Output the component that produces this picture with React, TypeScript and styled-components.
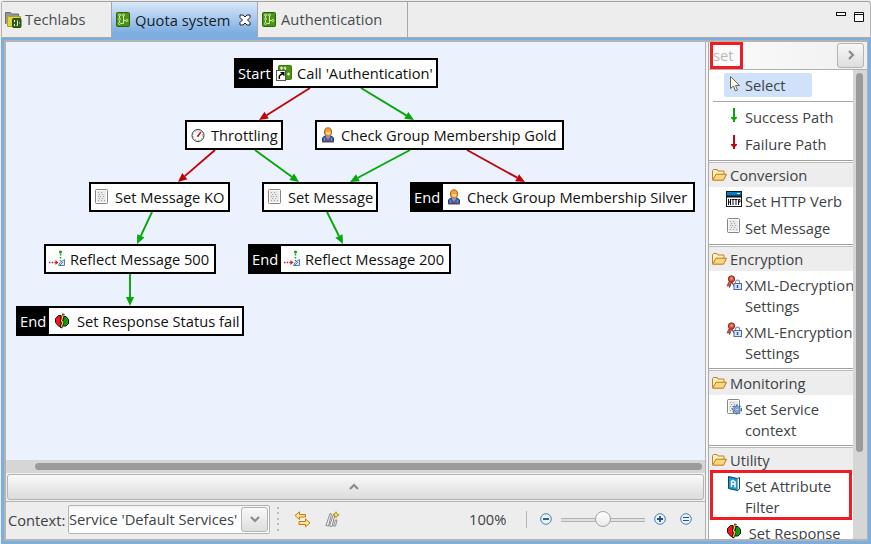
import React from 'react';
import styled, { createGlobalStyle } from 'styled-components';

const GlobalStyle = createGlobalStyle`
  * { box-sizing: border-box; }
  html, body { margin: 0; padding: 0; }
  body {
    width: 871px;
    height: 544px;
    overflow: hidden;
    background: #ededed;
    color: #3d4245;
    font: 14.7px/20px "Open Sans", "Noto Sans", sans-serif;
    white-space: nowrap;
  }
`;

const SUCCESS = '#05a80b';
const FAILURE = '#c00408';
const BLUE = '#7eaee0';

const Window = styled.div`
  width: 871px;
  height: 544px;
  display: flex;
  flex-direction: column;
  padding: 1px 0 0 1px;
  background: #ededed;
`;

const TabBar = styled.div`
  height: 37px;
  flex: none;
  display: flex;
  border-top: 1px solid #a2a2a2;
  border-left: 1px solid #b4b4b4;
  border-right: 1px solid #b4b4b4;
  border-radius: 3px 3px 0 0;
`;

const Tab = styled.div<{ $width: number; $active?: boolean }>`
  width: ${(p) => p.$width}px;
  display: flex;
  align-items: center;
  padding: 0 0 1px 4px;
  gap: 5px;
  border-right: 1px solid #a8a8a8;
  border-bottom: ${(p) => (p.$active ? 'none' : '1px solid #a8a8a8')};
  background: ${(p) => (p.$active ? 'linear-gradient(#d9e7f7, #a9caee 45%, #7eaee0 85%)' : '#ededed')};
  color: ${(p) => (p.$active ? '#17202a' : '#484d50')};
  svg { flex: none; }
`;

const FolderTab = styled(Tab)`
  padding-left: 3px;
  gap: 3px;
`;

const TabText = styled.span`
  letter-spacing: 0.05px;
`;

const CloseIcon = styled.svg`
  margin-left: 3px;
`;

const WindowButtons = styled.div`
  flex: 1;
  display: flex;
  justify-content: flex-end;
  gap: 8px;
  padding: 10px 6px 0 0;
  border-bottom: 1px solid #a8a8a8;
`;

const Frame = styled.div`
  flex: 1;
  min-height: 0;
  display: flex;
  border-style: solid;
  border-color: ${BLUE};
  border-width: 2px 3px 3px 3px;
`;

const Inner = styled.div`
  flex: 1;
  min-width: 0;
  display: flex;
  border: 2px solid #b2b4b2;
  border-right-width: 1px;
  background: #f4f4f4;
`;

const Editor = styled.div`
  width: 700px;
  flex: none;
  display: flex;
  flex-direction: column;
  border-right: 1px solid #b0b0b0;
  background: #ededed;
`;

const Canvas = styled.div`
  position: relative;
  height: 418px;
  flex: none;
  background: #ebf1fd;
  overflow: hidden;
`;

const Links = styled.svg`
  position: absolute;
  inset: 0;
`;

const NodeBox = styled.div<{ $x: number; $y: number; $w: number; $inset?: number }>`
  position: absolute;
  left: ${(p) => p.$x}px;
  top: ${(p) => p.$y}px;
  width: ${(p) => p.$w}px;
  height: 30px;
  display: flex;
  align-items: center;
  border: 2px solid #000;
  background: #fff;
  color: #111;
  svg {
    flex: none;
    margin: 0 ${(p) => 5 + (p.$inset ?? 0)}px 1px ${(p) => 3 + (p.$inset ?? 0)}px;
  }
`;

const NodeTag = styled.span<{ $w: number }>`
  width: ${(p) => p.$w}px;
  flex: none;
  align-self: stretch;
  display: flex;
  align-items: center;
  padding-left: 2px;
  background: #000;
  color: #fff;
`;

const HScroll = styled.div`
  height: 13px;
  flex: none;
  display: flex;
  align-items: center;
  padding: 0 3px 0 29px;
  background: #d6d6d6;
`;

const HThumb = styled.div`
  flex: 1;
  height: 7px;
  border-radius: 4px;
  background: #9a9b9c;
`;

const ExpandBar = styled.div`
  height: 26px;
  flex: none;
  margin: 1px 1px 0 1px;
  padding-right: 3px;
  display: flex;
  align-items: center;
  justify-content: center;
  border: 1px solid #b4b5b1;
  border-radius: 3px;
  background: linear-gradient(#f9f9f9, #dcdcdc);
`;

const ToolStrip = styled.div`
  flex: 1;
  margin-top: 1px;
  display: flex;
  align-items: center;
  padding: 0 0 3px 2px;
  border-top: 1px solid #b4b5b3;
`;

const ContextLabel = styled.span`
  width: 57px;
  padding-top: 2px;
`;

const Combo = styled.div`
  width: 202px;
  height: 29px;
  margin-left: 3px;
  display: flex;
  align-items: center;
  border: 1px solid #b4b5b1;
  border-radius: 2px;
  background: linear-gradient(#f3f3f3, #fff 8px);
`;

const ComboText = styled.span`
  flex: 1;
`;

const SmallButton = styled.div<{ $w: number; $h: number }>`
  width: ${(p) => p.$w}px;
  height: ${(p) => p.$h}px;
  flex: none;
  margin-right: 1px;
  display: flex;
  align-items: center;
  justify-content: center;
  border: 1px solid #b4b5b1;
  border-radius: 3px;
  background: linear-gradient(#f8f8f8, #dedede);
`;

const Grip = styled.div`
  width: 2px;
  height: 24px;
  margin: 0 15px 0 7px;
  background: repeating-linear-gradient(#bdbdbd 0 2px, transparent 2px 5.4px);
`;

const ToolGap = styled.div`
  width: 14px;
`;

const ZoomValue = styled.span`
  margin-left: 129px;
  width: 38px;
`;

const Divider = styled.div`
  width: 1px;
  height: 17px;
  margin: 0 13px 0 19px;
  background: #b4b4b4;
`;

const Slider = styled.div`
  width: 84px;
  height: 17px;
  margin: 0 9px 0 9px;
  display: flex;
  align-items: center;
  justify-content: center;
  background: linear-gradient(#b3b3b0, #b3b3b0) 0 7px / 100% 1px no-repeat,
    linear-gradient(#e0e0e0, #e0e0e0) 0 8px / 100% 2px no-repeat,
    linear-gradient(#b3b3b0, #b3b3b0) 0 10px / 100% 1px no-repeat;
`;

const Knob = styled.div`
  width: 16px;
  height: 16px;
  border: 1px solid #a5a6a2;
  border-radius: 50%;
  background: linear-gradient(#fff, #e9e9e9);
`;

const ZoomFit = styled.div`
  display: flex;
  margin-left: 14px;
`;

const Palette = styled.div`
  position: relative;
  width: 159px;
  margin-left: 2px;
  flex: none;
  display: flex;
  flex-direction: column;
  border-left: 1px solid #a9aaa9;
  background: #fff;
  overflow: hidden;
`;

const SearchRow = styled.div`
  height: 28px;
  flex: none;
  display: flex;
  align-items: center;
  justify-content: space-between;
  padding: 0 2px 1px 4px;
  border-bottom: 1px solid #b0b0ae;
  background: linear-gradient(90deg, #fbfbfb, #f0f0f0);
  color: #b7babb;
`;

const PaletteBody = styled.div`
  flex: 1;
  min-height: 0;
  display: flex;
`;

const Drawers = styled.div`
  width: 144px;
  flex: none;
  overflow: hidden;
`;

const VScroll = styled.div`
  flex: 1;
  padding: 3px 3px 0 3px;
  background: #d6d6d6;
`;

const VThumb = styled.div`
  width: 7px;
  height: 379px;
  border-radius: 4px;
  background: #9a9b9c;
`;

const ToolsGroup = styled.div`
  height: 90px;
  padding-top: 3px;
`;

const SelectRow = styled.div`
  width: 88px;
  height: 24px;
  margin-left: 15px;
  display: flex;
  align-items: center;
  padding-left: 3px;
  gap: 2px;
  background: #cfe2fa;
  border-radius: 2px;
  svg { margin-bottom: 2px; }
`;

const ToolsRule = styled.div`
  height: 1px;
  margin: 4px 0 1px 4px;
  background: #a8a8a8;
`;

const Item = styled.div<{ $lines?: number }>`
  height: ${(p) => (p.$lines === 2 ? 47 : 27)}px;
  display: flex;
  padding: 4px 0 0 17px;
  gap: 3px;
  line-height: 20.5px;
  white-space: pre;
  svg { flex: none; }
`;

const Drawer = styled.div`
  border-top: 1px solid #a0a0a0;
  padding: 1px 0 3px;
`;

const DrawerTitle = styled.div`
  height: 25px;
  display: flex;
  align-items: center;
  padding: 0 0 1px 3px;
  gap: 3px;
  border-top: 1px solid #bdbdbd;
  background: #ededed;
`;

const Marker = styled.div<{ $x: number; $y: number; $w: number; $h: number }>`
  position: absolute;
  left: ${(p) => p.$x}px;
  top: ${(p) => p.$y}px;
  width: ${(p) => p.$w}px;
  height: ${(p) => p.$h}px;
  border: 3px solid #ee1c25;
`;

/* ---- icons ---- */

const CircuitIcon = () => (
  <svg width="14" height="15" viewBox="0 0 14 15">
    <rect x=".5" y=".5" width="13" height="14" rx="1" fill="#4b9410" stroke="#2f6406" />
    <path d="M4.500 3h1M3.500 4v2M3.500 8.500v2M5 11.500h2.500v-9M8 8.500h2" stroke="#cfe6b6" fill="none" />
    <g fill="#4b9410" stroke="#e4f0d2" strokeWidth=".8">
      <circle cx="3.500" cy="3" r="1" /><circle cx="3.500" cy="7.200" r="1" /><circle cx="3.500" cy="11.500" r="1" />
      <circle cx="7.500" cy="3" r="1" /><circle cx="10.800" cy="8.500" r="1.100" />
    </g>
  </svg>
);

const FolderCircuitIcon = () => (
  <svg width="17" height="17" viewBox="0 0 17 17">
    <path d="M.5 13V1.500h5l1 1.500h7v3" fill="#979797" stroke="#6c6c6c" />
    <path d="M2.500 15.500v-9l1-1h12v10z" fill="#dfd63b" stroke="#aaa02a" />
    <rect x="7.500" y="7.500" width="8.500" height="9" rx="1" fill="#315f18" stroke="#294f12" />
    <path d="M9.500 9v2M9.500 13v2M12.500 9.500v5h-1M14.500 11.500v1" stroke="#e8f2dc" fill="none" />
  </svg>
);

const ShortcutIcon = () => (
  <svg width="16" height="16" viewBox="0 0 16 16">
    <rect x="2.500" y=".5" width="13" height="14" rx="1" fill="#4b9410" stroke="#3a780a" />
    <path d="M5.500 2v3M9.500 3v7M12.500 8v2" stroke="#cfe6b6" fill="none" />
    <circle cx="5.500" cy="3" r="1" fill="none" stroke="#e4f0d2" />
    <circle cx="9" cy="3" r="1" fill="none" stroke="#e4f0d2" />
    <circle cx="12.500" cy="9" r="1" fill="none" stroke="#e4f0d2" />
    <rect x=".5" y="5.500" width="9" height="10" fill="#fff" stroke="#555" />
    <path d="M3.500 14c-1-3 .5-4.500 3-5" stroke="#000" strokeWidth="1.500" fill="none" />
    <path d="M4 7h4.500v4.500z" fill="#000" />
  </svg>
);

const GaugeIcon = () => (
  <svg width="16" height="16" viewBox="0 0 16 16">
    <circle cx="8" cy="8.500" r="6" fill="#fff" stroke="#333" />
    <circle cx="8" cy="8.500" r="4.600" fill="none" stroke="#999" strokeDasharray="1 2" />
    <path d="M8 9l2.800-4" stroke="#d01515" strokeWidth="1.500" />
    <circle cx="8" cy="9" r="1" fill="#d01515" />
  </svg>
);

const UserIcon = () => (
  <svg width="16" height="16" viewBox="0 0 16 16">
    <path d="M2.500 14.500v-3.500l2-2h7l2 2v3.500z" fill="#3366ad" stroke="#213f80" />
    <path d="M4.500 11v3M11.500 11v3" stroke="#7c9dca" strokeWidth=".7" />
    <path d="M6 9h4l-2 4z" fill="#dce8f4" />
    <path d="M8 10v3" stroke="#c03030" />
    <path d="M2 15h12" stroke="#903b4a" />
    <ellipse cx="8" cy="5" rx="3.500" ry="4.200" fill="#f2a33c" stroke="#a95913" />
    <path d="M6 5c0 2 1 3 2.500 3s2-1.500 2-3z" fill="#ffd595" />
  </svg>
);

const PageIcon = ({ gear = false }: { gear?: boolean }) => (
  <svg width="16" height="16" viewBox="0 0 16 16">
    <rect x="1.500" y=".5" width="12" height="14" rx="1" fill="#fafafa" stroke="#858585" />
    <rect x="3" y="2" width="9" height="11" fill="#e9e9e9" />
    <path d="M4 3.500h1M7 3.500h1M5 5.500h1M8 5.500h1M4 7.500h1M6 7.500h1M9 7.500h1M5 9.500h1M8 9.500h1M4 11.500h1M7 11.500h1M10 11.500h1" stroke="#a2a2a2" />
    {gear && (
      <g fill="none">
        <circle cx="11" cy="10.500" r="4.300" stroke="#426fa8" strokeWidth="1.500" strokeDasharray="2 1.100" />
        <circle cx="11" cy="10.500" r="2.900" fill="#9dbce2" stroke="#4f7bb4" />
        <circle cx="11" cy="10.500" r="1.100" fill="#fff" stroke="#4f7bb4" strokeWidth=".7" />
      </g>
    )}
  </svg>
);

const ReflectIcon = () => (
  <svg width="16" height="17" viewBox="0 0 16 17">
    <path d="M11.500 1v10" stroke="#14a01a" strokeWidth="1.500" strokeDasharray="1.500 1.500" />
    <circle cx="11.500" cy="2" r="1.600" fill="#14a01a" />
    <path d="M0 12.500h8" stroke="#d02020" strokeWidth="1.500" strokeDasharray="1.500 1.200" />
    <path d="M6.500 10l3 2.500-3 2.500z" fill="#d02020" />
    <path d="M9.500 15.500l1.500-3 4.500-3v6z" fill="#dbeafb" stroke="#537bae" />
    <path d="M11 15l3-3" stroke="#537bae" />
  </svg>
);

const StatusIcon = () => (
  <svg width="16" height="16" viewBox="0 0 16 16">
    <path d="M7 2.500H4.500L1.500 5.500v4l3 3.500 2.500 1z" fill="#ff1018" stroke="#111" />
    <path d="M10 3.500h2l2.500 3v4l-2.500 2.500H8z" fill="#08a010" stroke="#111" />
    <path d="M9.500.8L7.500 8l1.500 1-2 6" stroke="#111" strokeWidth="2.400" fill="none" />
    <path d="M9.300 1.500L7.500 8l1.500 1-1.700 5" stroke="#ffd81c" strokeWidth="1.200" fill="none" />
  </svg>
);

const CursorIcon = () => (
  <svg width="16" height="17" viewBox="0 0 16 17">
    <path d="M3.500 .5v12l3-2.500 2 5 2-1-2-4.500h4z" fill="#fffbe2" stroke="#66655b" />
  </svg>
);

const PathIcon = ({ color }: { color: string }) => (
  <svg width="16" height="17" viewBox="0 0 16 17">
    <path d="M7 1h2v9h2v1l-2 2v2H7v-2l-2-2v-1h2z" fill={color} />
  </svg>
);

const FolderIcon = () => (
  <svg width="15" height="12" viewBox="0 0 15 12">
    <path d="M.5 10.500v-9l1-1h3.500l1 1.500h6v3" fill="#fff0ba" stroke="#bd812c" />
    <path d="M.7 11.200l3.300-6h10.500l-3 6z" fill="#fbd77c" stroke="#b87824" />
  </svg>
);

const HttpIcon = () => (
  <svg width="16" height="16" viewBox="0 0 16 16">
    <rect x=".5" y=".5" width="15" height="15" fill="#fff" stroke="#111b24" />
    <rect x="1" y="1" width="14" height="4" fill="#0879c5" />
    <path d="M11 2.500h3" stroke="#dcedfb" />
    <path d="M1 5.500h14" stroke="#111" strokeWidth="2" />
    <path d="M2.500 8v6M4.500 8v6M2.500 11h2M5.500 8.500h3M7 8v6M8.500 8.500h3M10 8v6M12.500 14v-5.500h1.500v2.500h-1.500" stroke="#111" fill="none" />
  </svg>
);

const KeyLockIcon = () => (
  <svg width="16" height="16" viewBox="0 0 16 16">
    <path d="M4 5l-3 6 2-.5.5 2 2.500-6 2 5" fill="#d35343" stroke="#94423c" />
    <circle cx="5.500" cy="4" r="3.200" fill="#d84a31" stroke="#8f332a" />
    <circle cx="5.500" cy="3.500" r="1.200" fill="#eea28b" />
    <path d="M9.500 9V7c0-2.500 4-2.500 4 0v2" fill="none" stroke="#8295b5" strokeWidth="1.200" />
    <rect x="8" y="8.500" width="7.500" height="6" fill="#d5e4f7" stroke="#476ba3" />
    <path d="M11.500 10v3" stroke="#35588d" strokeWidth="1.500" />
  </svg>
);

const AttributeIcon = () => (
  <svg width="16" height="17" viewBox="0 0 16 17">
    <path d="M2.500 .5l9 2v12l-9-2z" fill="#159bd4" stroke="#163f5b" />
    <path d="M11.500 2.500l2-1v11.500l-2 1.500" fill="#fff" stroke="#163f5b" />
    <path d="M5.500 11V5.500l1.500-1 2 1.500v5.500M5.500 8h3.500" stroke="#fff" strokeWidth="1.500" fill="none" />
  </svg>
);

const SwapIcon = () => (
  <svg width="17" height="17" viewBox="0 0 17 17">
    <path d="M5.500 .8L1 4.500l4.500 4V6h6V3.500h-6z" fill="#ffe793" stroke="#bd7b0c" />
    <path d="M11.500 8l4.500 3.800-4.500 4V13.500H5v-3h6.500z" fill="#ffe793" stroke="#bd7b0c" />
  </svg>
);

const LayersIcon = () => (
  <svg width="15" height="17" viewBox="0 0 15 17">
    <g fill="#f6f6f6" stroke="#8b8b8b">
      <path d="M1 14.500l4-12 1.500.5-3 12z" />
      <path d="M4.500 15l4-12 1.500.5-3 12z" />
      <path d="M8.500 15l2-6h1.500l-1.500 6z" />
    </g>
    <path d="M11 .8l1 2 2.200 1-2.200 1-1 2-1-2-2-1 2-1z" fill="#f9e56b" stroke="#b9921e" />
  </svg>
);

const ZoomIcon = ({ kind }: { kind: 'out' | 'in' | 'fit' }) => (
  <svg width="12" height="12" viewBox="0 0 12 12">
    <circle cx="6" cy="6" r="5.300" fill="#e6f4ff" stroke="#4e7fae" />
    {kind === 'fit' ? (
      <path d="M3 4.500h6M3 7.500h6" stroke="#294f8b" />
    ) : (
      <path d={kind === 'in' ? 'M3 6h6M6 3v6' : 'M3 6h6'} stroke="#294f8b" strokeWidth="1.800" />
    )}
  </svg>
);

const Chevron = ({ d }: { d: string }) => (
  <svg width="10" height="10" viewBox="0 0 10 10">
    <path d={d} fill="none" stroke="#8b8c8a" strokeWidth="2.200" />
  </svg>
);

/* ---- flow graph ---- */

interface FlowNode {
  x: number;
  y: number;
  w: number;
  tag?: string;
  inset?: number;
  icon: React.ReactNode;
  label: string;
}

const nodes: FlowNode[] = [
  { x: 228, y: 16, w: 204, tag: 'Start', icon: <ShortcutIcon />, label: "Call 'Authentication'" },
  { x: 179, y: 78, w: 98, icon: <GaugeIcon />, label: 'Throttling' },
  { x: 309, y: 78, w: 249, icon: <UserIcon />, label: 'Check Group Membership Gold' },
  { x: 83, y: 140, w: 141, icon: <PageIcon />, label: 'Set Message KO' },
  { x: 256, y: 140, w: 116, icon: <PageIcon />, label: 'Set Message' },
  { x: 404, y: 140, w: 285, tag: 'End', icon: <UserIcon />, label: 'Check Group Membership Silver' },
  { x: 38, y: 202, w: 172, icon: <ReflectIcon />, label: 'Reflect Message 500' },
  { x: 242, y: 202, w: 203, tag: 'End', icon: <ReflectIcon />, label: 'Reflect Message 200' },
  { x: 10, y: 264, w: 228, tag: 'End', inset: 2, icon: <StatusIcon />, label: 'Set Response Status fail' },
];

type LinkSpec = [number, number, number, number, string];

const links: LinkSpec[] = [
  [304, 46, 253, 78, FAILURE],
  [355, 46, 408, 78, SUCCESS],
  [209, 108, 172, 140, FAILURE],
  [249, 108, 293, 140, SUCCESS],
  [404, 108, 344, 140, SUCCESS],
  [461, 108, 519, 140, FAILURE],
  [146, 170, 131, 202, SUCCESS],
  [321, 170, 337, 202, SUCCESS],
  [124, 232, 124, 264, SUCCESS],
];

const Link = ({ link: [x1, y1, x2, y2, color] }: { link: LinkSpec }) => {
  const len = Math.hypot(x2 - x1, y2 - y1);
  const ux = (x2 - x1) / len;
  const uy = (y2 - y1) / len;
  const bx = x2 - ux * 9;
  const by = y2 - uy * 9;
  return (
    <g>
      <line x1={x1} y1={y1} x2={bx} y2={by} stroke={color} strokeWidth="1.900" />
      <polygon
        points={`${x2},${y2} ${bx - uy * 4},${by + ux * 4} ${bx + uy * 4},${by - ux * 4}`}
        fill={color}
      />
    </g>
  );
};

const drawers: { title: string; items: { icon: React.ReactNode; label: string }[] }[] = [
  { title: 'Conversion', items: [
    { icon: <HttpIcon />, label: 'Set HTTP Verb' },
    { icon: <PageIcon />, label: 'Set Message' },
  ] },
  { title: 'Encryption', items: [
    { icon: <KeyLockIcon />, label: 'XML-Decryption\nSettings' },
    { icon: <KeyLockIcon />, label: 'XML-Encryption\nSettings' },
  ] },
  { title: 'Monitoring', items: [{ icon: <PageIcon gear />, label: 'Set Service\ncontext' }] },
  { title: 'Utility', items: [
    { icon: <AttributeIcon />, label: 'Set Attribute\nFilter' },
    { icon: <StatusIcon />, label: ' Set Response' },
  ] },
];

export default function App() {
  return (
    <>
      <GlobalStyle />
      <Window>
        <TabBar>
          <FolderTab $width={110}><FolderCircuitIcon /><TabText>Techlabs</TabText></FolderTab>
          <Tab $width={146} $active>
            <CircuitIcon />
            <TabText>Quota system</TabText>
            <CloseIcon width="12" height="12" viewBox="0 0 12 12">
              <path d="M1 1h3l2 2 2-2h3v2.500L8.500 6 11 8.500V11H8L6 9l-2 2H1V8.500L3.500 6 1 3.500z" fill="#fff" stroke="#222" />
            </CloseIcon>
          </Tab>
          <Tab $width={150}><CircuitIcon /><TabText>Authentication</TabText></Tab>
          <WindowButtons>
            <svg width="10" height="4" viewBox="0 0 10 4"><rect x=".5" y=".5" width="9" height="3" fill="#fff" stroke="#111" /></svg>
            <svg width="10" height="10" viewBox="0 0 10 10"><path d="M.5.500h9v9h-9zM.5 2.500h9" fill="#fff" stroke="#111" /></svg>
          </WindowButtons>
        </TabBar>
        <Frame>
          <Inner>
            <Editor>
              <Canvas>
                <Links width="699" height="418" viewBox="0 0 699 418">
                  {links.map((l, i) => <Link key={i} link={l} />)}
                </Links>
                {nodes.map((n) => (
                  <NodeBox key={n.label} $x={n.x} $y={n.y} $w={n.w} $inset={n.inset}>
                    {n.tag && <NodeTag $w={n.tag === 'Start' ? 37 : 31}>{n.tag}</NodeTag>}
                    {n.icon}
                    {n.label}
                  </NodeBox>
                ))}
              </Canvas>
              <HScroll><HThumb /></HScroll>
              <ExpandBar><Chevron d="M1 7l4-4 4 4" /></ExpandBar>
              <ToolStrip>
                <ContextLabel>Context:</ContextLabel>
                <Combo>
                  <ComboText>Service 'Default Services'</ComboText>
                  <SmallButton $w={27} $h={25}><Chevron d="M1 3l4 4 4-4" /></SmallButton>
                </Combo>
                <Grip />
                <SwapIcon />
                <ToolGap />
                <LayersIcon />
                <ZoomValue>100%</ZoomValue>
                <Divider />
                <ZoomIcon kind="out" />
                <Slider><Knob /></Slider>
                <ZoomIcon kind="in" />
                <ZoomFit><ZoomIcon kind="fit" /></ZoomFit>
              </ToolStrip>
            </Editor>
            <Palette>
              <SearchRow>
                <span>set</span>
                <SmallButton $w={27} $h={25}><Chevron d="M3 1l4 4-4 4" /></SmallButton>
              </SearchRow>
              <PaletteBody>
                <Drawers>
                  <ToolsGroup>
                    <SelectRow><CursorIcon />Select</SelectRow>
                    <ToolsRule />
                    <Item><PathIcon color={SUCCESS} />Success Path</Item>
                    <Item><PathIcon color={FAILURE} />Failure Path</Item>
                  </ToolsGroup>
                  {drawers.map((d) => (
                    <Drawer key={d.title}>
                      <DrawerTitle><FolderIcon />{d.title}</DrawerTitle>
                      {d.items.map((it) => (
                        <Item key={it.label} $lines={it.label.includes('\n') ? 2 : 1}>{it.icon}{it.label}</Item>
                      ))}
                    </Drawer>
                  ))}
                </Drawers>
                <VScroll><VThumb /></VScroll>
              </PaletteBody>
              <Marker $x={1} $y={0} $w={33} $h={27} />
              <Marker $x={1} $y={428} $w={142} $h={50} />
            </Palette>
          </Inner>
        </Frame>
      </Window>
    </>
  );
}
